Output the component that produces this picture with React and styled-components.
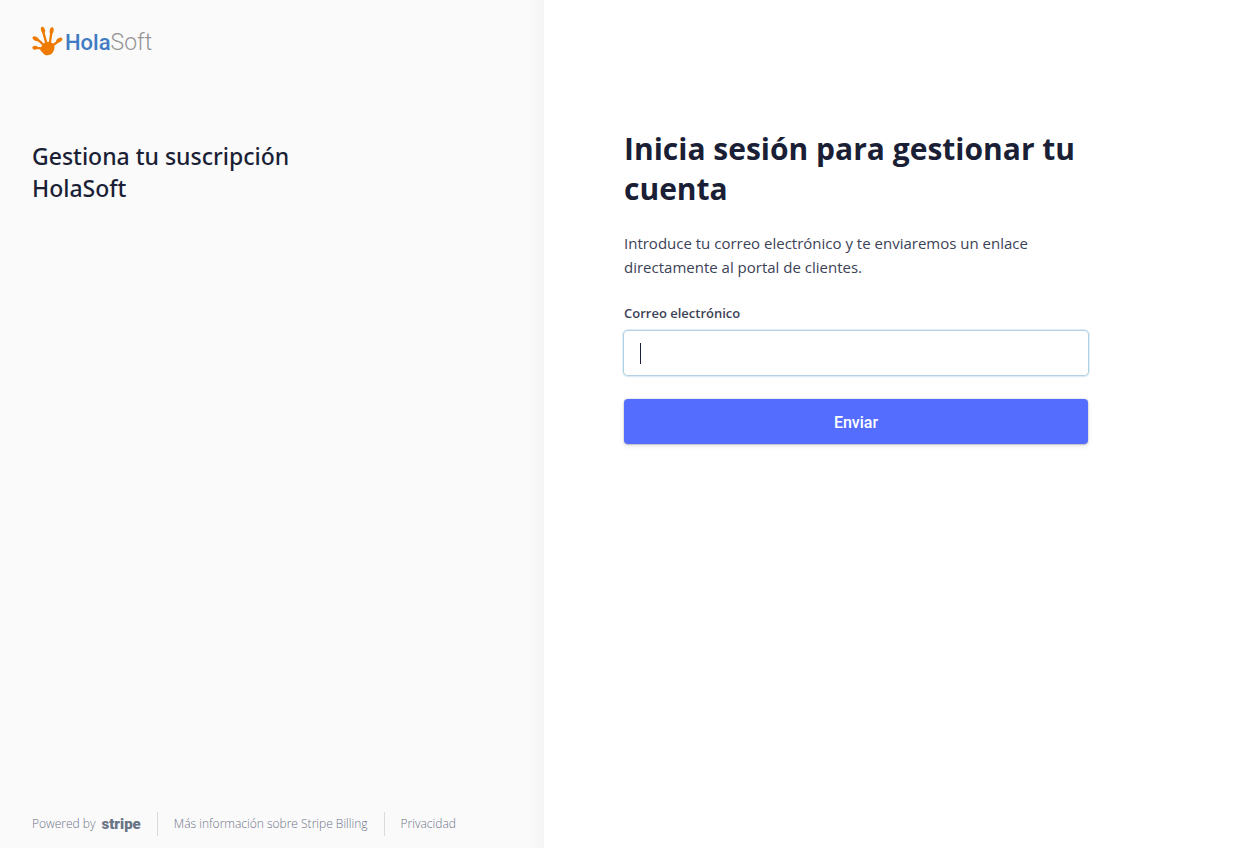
import React, { useState } from "react";
import styled, { createGlobalStyle, keyframes } from "styled-components";

const GlobalStyle = createGlobalStyle`
  *, *::before, *::after { box-sizing: border-box; }
  body {
    margin: 0;
    background: #fff;
    color: #1a1f36;
    font-family: "Segoe UI", "Open Sans", "Noto Sans", sans-serif;
  }
  h1, h2, p { margin: 0; }
`;

const Page = styled.div`
  display: grid;
  grid-template-columns: minmax(0, 544px) minmax(0, 1fr);
  min-height: 100vh;
`;

const Sidebar = styled.aside`
  display: flex;
  flex-direction: column;
  padding: 26px 32px 12px;
  background: linear-gradient(to left, #f5f5f5, #fafafa 16px);
`;

const Brand = styled.a`
  display: flex;
  align-items: flex-start;
  gap: 1px;
  height: 34px;
  color: #959595;
  font: 300 23px/34px Roboto, sans-serif;
  text-decoration: none;

  strong {
    color: #3f7cc4;
    font-size: 22px;
    font-weight: 500;
  }
`;

const Title = styled.h2`
  max-width: 320px;
  margin-top: 80px;
  font-family: "Segoe UI", "Noto Sans", sans-serif;
  font-size: 23px;
  font-weight: 500;
  line-height: 32px;
`;

const Footer = styled.footer`
  display: flex;
  align-items: center;
  margin-top: auto;
  color: #6f7488;
  font-size: 12px;
  font-weight: 300;
  line-height: 24px;
`;

const FooterLink = styled.a`
  display: flex;
  align-items: center;
  gap: 6px;
  color: inherit;
  text-decoration: none;
  white-space: nowrap;

  & + & {
    margin-left: 16px;
    padding-left: 16px;
    border-left: 1px solid #d9dadf;
  }
`;

const StripeName = styled.strong`
  color: #697386;
  font: 900 15px/22px Roboto, sans-serif;
`;

const Main = styled.main`
  padding: 129px 80px 80px;
`;

const Form = styled.form`
  display: flex;
  flex-direction: column;
  max-width: 464px;
`;

const Heading = styled.h1`
  font-size: 30px;
  font-weight: 700;
  line-height: 40px;
`;

const Intro = styled.p`
  margin-top: 22px;
  color: #3c4257;
  font-size: 15px;
  font-weight: 400;
  line-height: 24px;
`;

const Label = styled.label`
  margin-top: 24px;
  color: #3c4257;
  font-size: 13px;
  font-weight: 600;
  line-height: 20px;
`;

const Field = styled.div`
  position: relative;
  margin-top: 8px;
`;

const blink = keyframes`
  0%, 70% { opacity: 1; }
  71%, 100% { opacity: 0; }
`;

const Caret = styled.span`
  position: absolute;
  top: 12px;
  left: 16px;
  width: 1px;
  height: 21px;
  background: #1a1f36;
  pointer-events: none;
  animation: ${blink} 4s step-end infinite;
`;

const Input = styled.input`
  display: block;
  width: 100%;
  height: 44px;
  padding: 8px 16px;
  border: 0;
  border-radius: 4px;
  outline: 0;
  background: #fff;
  box-shadow: 0 0 0 1px #b5d0e2, 0 0 0 2px #dcedf8, 0 1px 2px 1px #dcedf8;
  color: #1a1f36;
  caret-color: ${(props) => (props.value ? "#1a1f36" : "transparent")};
  font: 400 16px/28px "Open Sans", sans-serif;
`;

const Submit = styled.button`
  height: 45px;
  margin-top: 24px;
  padding: 2px 16px 0;
  border: 0;
  border-radius: 4px;
  background: #546dff;
  box-shadow: 0 0 0 1px rgba(60, 66, 87, 0.08), 0 2px 5px rgba(60, 66, 87, 0.14), 0 1px 1px rgba(0, 0, 0, 0.12);
  color: #fff;
  font: 500 16px/24px "Segoe UI", Roboto, sans-serif;
  cursor: pointer;
`;

function HandMark() {
  return (
    <svg width="32" height="32" viewBox="18 12 96 96" fill="#ee7b00" aria-hidden="true">
      <path d="M43 81C47 73 50 64 60 61C70 58 81 62 84 69C87 76 85 84 81 90C76 100 60 103 53 96C51 91 42 88 43 81Z" />
      <path d="M50 24L62 67M77 25L71 66M102 53Q88 66 78 72M29 49Q43 58 56 73M26 77L52 80" fill="none" stroke="#ee7b00" strokeWidth="7" />
      <ellipse cx="51" cy="24" rx="6" ry="10" transform="rotate(-16 51 24)" />
      <ellipse cx="77" cy="26" rx="6" ry="10" transform="rotate(8 77 26)" />
      <ellipse cx="100" cy="54" rx="10" ry="6" transform="rotate(-32 100 54)" />
      <ellipse cx="29" cy="50" rx="10" ry="6" transform="rotate(28 29 50)" />
      <ellipse cx="27" cy="77" rx="8" ry="6" />
    </svg>
  );
}

export default function App() {
  const [email, setEmail] = useState("");

  return (
    <>
      <GlobalStyle />
      <Page>
        <Sidebar>
          <Brand href="#">
            <HandMark />
            <span><strong>Hola</strong>Soft</span>
          </Brand>
          <Title>Gestiona tu suscripción HolaSoft</Title>
          <Footer>
            <FooterLink href="#">Powered by <StripeName>stripe</StripeName></FooterLink>
            <FooterLink href="#">Más información sobre Stripe Billing</FooterLink>
            <FooterLink href="#">Privacidad</FooterLink>
          </Footer>
        </Sidebar>
        <Main>
          <Form onSubmit={(event) => event.preventDefault()}>
            <Heading>Inicia sesión para gestionar tu cuenta</Heading>
            <Intro>
              Introduce tu correo electrónico y te enviaremos un enlace directamente al portal de clientes.
            </Intro>
            <Label htmlFor="email">Correo electrónico</Label>
            <Field>
              <Input
                id="email"
                type="email"
                value={email}
                onChange={(event) => setEmail(event.target.value)}
                autoFocus
              />
              {!email && <Caret />}
            </Field>
            <Submit type="submit">Enviar</Submit>
          </Form>
        </Main>
      </Page>
    </>
  );
}
